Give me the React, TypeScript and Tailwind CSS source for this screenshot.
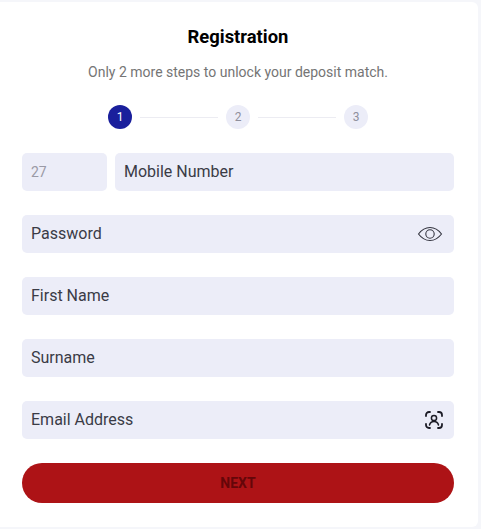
const inputClass =
  "h-[38px] w-full rounded-[5px] bg-[#ecedf8] px-[9px] pb-[1px] text-[16px] text-[#3a3b46] placeholder:text-[#3a3b46] outline-none";

const EyeIcon = () => (
  <svg width="26" height="18" viewBox="0 0 26 18" fill="none" stroke="#33343f" strokeWidth="1.100">
    <path d="M1.500 9C4.500 5 8.500 2.500 13 2.500S21.500 5 24.500 9C21.500 13 17.500 15.500 13 15.500S4.500 13 1.500 9Z" />
    <circle cx="13" cy="9" r="4.200" />
  </svg>
);

const FaceIcon = () => (
  <svg width="20" height="20" viewBox="0 0 20 20" fill="none" stroke="#1c1c26" strokeWidth="1.800" strokeLinecap="round">
    <path d="M2 6V5a3 3 0 0 1 3-3h1M14 2h1a3 3 0 0 1 3 3v1M18 14v1a3 3 0 0 1-3 3h-1M6 18H5a3 3 0 0 1-3-3v-1" />
    <circle cx="10" cy="8" r="2.600" strokeWidth="1.500" />
    <path d="M5.500 15c.6-2.400 2.400-3.500 4.500-3.500s3.900 1.100 4.500 3.500" strokeWidth="1.500" />
  </svg>
);

const Step = ({ n, active }: { n: number; active?: boolean }) => (
  <div
    className={
      active
        ? "flex h-6 w-6 items-center justify-center rounded-full bg-[#1a1f9c] text-[12px] text-white"
        : "flex h-6 w-6 items-center justify-center rounded-full bg-[#ecedf8] text-[12px] text-[#8f8f9c]"
    }
  >
    {n}
  </div>
);

const StepLine = () => <div className="mx-2 h-px w-[78px] bg-[#ececf2]" />;

export default function App() {
  return (
    <div className="h-[529px] w-[481px] bg-[#f5f6fa] pt-[2px] pr-[3px] pb-[2px] font-['Roboto',sans-serif]">
      <div className="h-full rounded-r-[6px] bg-white pt-[24px] pr-[24px] pl-[22px]">
        <h1 className="text-center text-[18.4px] leading-[21px] font-bold text-black">Registration</h1>
        <p className="mt-[15px] text-center text-[14px] leading-[20px] text-[#757575]">
          Only 2 more steps to unlock your deposit match.
        </p>

        {/* Steps */}
        <div className="mt-[23px] flex items-center justify-center">
          <Step n={1} active />
          <StepLine />
          <Step n={2} />
          <StepLine />
          <Step n={3} />
        </div>

        <form className="mt-6 flex flex-col gap-6">
          <div className="flex gap-2">
            <input
              className="h-[38px] w-[85px] shrink-0 rounded-[5px] bg-[#ecedf8] px-[9px] text-[14px] text-[#9a9aa6] outline-none"
              defaultValue="27"
              readOnly
            />
            <input className={inputClass} placeholder="Mobile Number" />
          </div>
          <div className="relative">
            <input className={inputClass} type="password" placeholder="Password" />
            <div className="absolute top-[10px] right-[11px]">
              <EyeIcon />
            </div>
          </div>
          <input className={inputClass} placeholder="First Name" />
          <input className={inputClass} placeholder="Surname" />
          <div className="relative">
            <input className={inputClass} placeholder="Email Address" />
            <div className="absolute top-[9px] right-[10px]">
              <FaceIcon />
            </div>
          </div>
          <button
            type="button"
            className="h-10 w-full rounded-full bg-[#ad1316] text-[14px] font-bold text-[#650609]"
          >
            NEXT
          </button>
        </form>
      </div>
    </div>
  );
}
